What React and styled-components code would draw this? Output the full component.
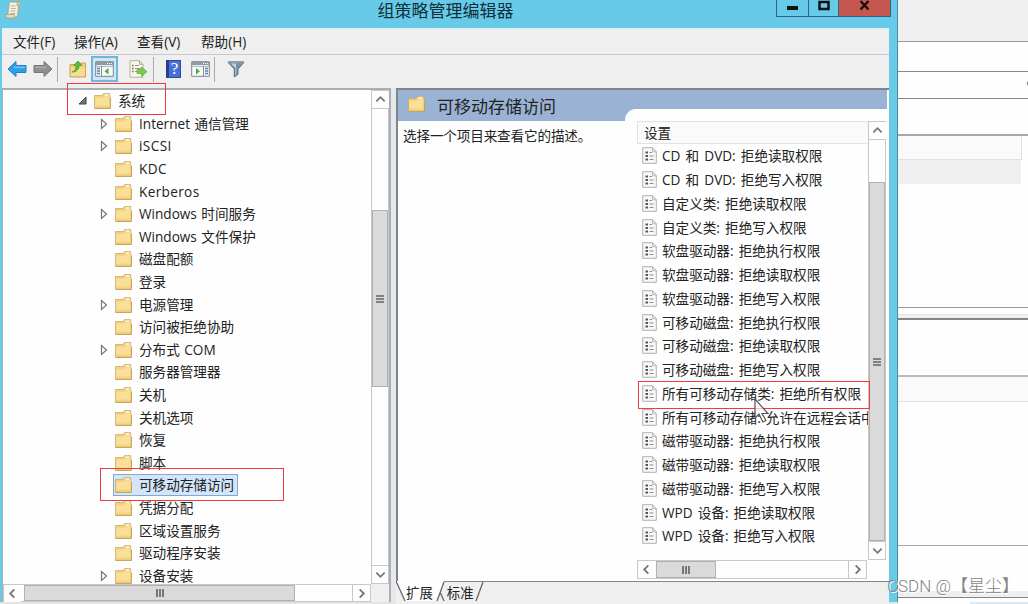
import React from "react";
import styled, { createGlobalStyle } from "styled-components";

const GlobalStyle = createGlobalStyle`
  * {
    box-sizing: border-box;
  }
  body {
    margin: 0;
    overflow: hidden;
    background: #fefefe;
    color: #222;
    font-family: "Open Sans", "Noto Sans CJK SC", sans-serif;
    font-size: 13.6px;
  }
  svg {
    display: block;
    flex: none;
  }
`;

const Screen = styled.div`
  position: relative;
  display: flex;
  width: 1028px;
  height: 604px;
  overflow: hidden;
  background: #e4e4e4;
`;

const Window = styled.div`
  display: flex;
  flex-direction: column;
  width: 898px;
  height: 602px;
  padding: 0 8px 0 2px;
  background: #68cae9;
  border-right: 1px solid #4f8ba0;
`;

const TitleBar = styled.div`
  position: relative;
  display: flex;
  justify-content: center;
  height: 28px;
  flex: none;
`;

const TitleIcon = styled.div`
  position: absolute;
  left: 3px;
  top: 1px;
`;

const Title = styled.div`
  font-size: 17px;
  line-height: 21px;
  color: #102e38;
`;

const WindowButtons = styled.div`
  position: absolute;
  top: 0;
  right: -2px;
  display: flex;
  height: 17px;
  border: 1px solid #2d6579;
  border-top: 0;
`;

const WindowButton = styled.div`
  display: flex;
  justify-content: center;
  width: ${(props) => props.$width}px;
  background: ${(props) => (props.$close ? "#c4574f" : "transparent")};
  border-left: ${(props) => (props.$first ? "0" : "1px solid #2d6579")};
`;

const MenuBar = styled.div`
  display: flex;
  height: 27px;
  flex: none;
  padding-left: 11px;
  background: #efefef;
  border-top: 1px solid #d9edf4;
  border-bottom: 1px solid #c9c9cd;
`;

const MenuItem = styled.div`
  width: ${(props) => props.$width}px;
  line-height: 25px;
  white-space: nowrap;
`;

const ToolBar = styled.div`
  display: flex;
  align-items: center;
  height: 33px;
  flex: none;
  padding: 0 0 5px 5px;
  background: #efefef;
`;

const Tool = styled.div`
  display: flex;
  align-items: center;
  justify-content: center;
  width: ${(props) => props.$width || 26}px;
  height: 26px;
  background: ${(props) => (props.$active ? "#cfe6f7" : "transparent")};
  border: ${(props) => (props.$active ? "2px solid #70b5dc" : "0")};
`;

const ToolSeparator = styled.div`
  width: 1px;
  height: 25px;
  margin: 0 ${(props) => props.$right}px 0 ${(props) => props.$left}px;
  background: #aaa;
`;

const Body = styled.div`
  display: flex;
  flex: 1;
  min-height: 0;
  background: #efefef;
`;

const TreePane = styled.div`
  display: flex;
  flex-direction: column;
  width: 389px;
  background: #efefef;
  border: solid #a9aeb5;
  border-width: 2px 2px 0 1px;
`;

const PaneRow = styled.div`
  display: flex;
  flex: 1;
  min-height: 0;
`;

const Tree = styled.div`
  flex: 1;
  overflow: hidden;
  background: #fefefe;
`;

const TreeRow = styled.div`
  display: flex;
  align-items: center;
  height: 22.6px;
  padding-left: ${(props) => props.$indent}px;
`;

const TreeArrow = styled.div`
  width: 14px;
`;

const TreeLabel = styled.div`
  display: flex;
  align-items: center;
  gap: 7px;
  height: 22px;
  padding: 0 3px 0 1px;
  line-height: 20px;
  letter-spacing: ${(props) => props.$tracking || 0}px;
  word-spacing: 1px;
  white-space: nowrap;
  border: 1px solid ${(props) => (props.$selected ? "#86a8cf" : "transparent")};
  background: ${(props) => (props.$selected ? "#d3e5fa" : "transparent")};
`;

const ScrollBar = styled.div`
  display: flex;
  flex-direction: ${(props) => (props.$vertical ? "column" : "row")};
  ${(props) => (props.$vertical ? "width" : "height")}: 18px;
  flex: none;
  background: #fdfdfd;
  border: 1px solid #c8c8c8;
`;

const ScrollButton = styled.div`
  display: flex;
  align-items: center;
  justify-content: center;
  flex: none;
  width: 17px;
  height: 17px;
  background: #fdfdfd;
`;

const ScrollGap = styled.div`
  flex: 0 0 ${(props) => props.$size}px;
  border: solid #c8c8c8;
  border-width: ${(props) => (props.$vertical ? "1px 0 0" : "0")};
`;

const ScrollThumb = styled.div`
  display: flex;
  align-items: center;
  justify-content: center;
  flex: 0 0 ${(props) => props.$size}px;
  background: #dadada;
  border: 1px solid #b1b1b1;
`;

const ScrollEnd = styled.div`
  display: flex;
  align-items: center;
  justify-content: center;
  width: ${(props) => (props.$vertical ? "auto" : "18px")};
  height: ${(props) => (props.$vertical ? "18px" : "auto")};
  margin-top: ${(props) => (props.$vertical ? "auto" : "0")};
  margin-left: ${(props) => (props.$vertical ? "0" : "auto")};
  border: solid #c8c8c8;
  border-width: ${(props) => (props.$vertical ? "1px 0 0" : "0 0 0 1px")};
`;

const Splitter = styled.div`
  width: 5px;
  background: #e6e8ec;
`;

const DetailPane = styled.div`
  display: flex;
  flex-direction: column;
  flex: 1;
  min-width: 0;
`;

const DetailFrame = styled.div`
  display: flex;
  flex-direction: column;
  height: 494px;
  background: #fefefe;
  border: solid #80858c;
  border-width: 2px 0 1px 2px;
`;

const DetailHeader = styled.div`
  display: flex;
  gap: 12px;
  height: 31px;
  flex: none;
  margin-right: 2px;
  padding: 6px 0 0 10px;
  font-size: 17px;
  background: #9ab2d3;
`;

const HeaderText = styled.div`
  line-height: 22px;
`;

const HeaderCut = styled.div`
  align-self: flex-end;
  flex: 1;
  height: 12px;
  margin-left: 57px;
  background: #fefefe;
  border-top-left-radius: 11px;
`;

const DetailContent = styled.div`
  display: flex;
  flex: 1;
  min-height: 0;
`;

const Description = styled.div`
  width: 239px;
  flex: none;
  padding: 5px 0 0 5px;
  line-height: 20px;
  letter-spacing: -0.15px;
`;

const SettingsArea = styled.div`
  display: flex;
  flex-direction: column;
  width: 249px;
`;

const Settings = styled.div`
  width: 231px;
  overflow: hidden;
`;

const ColumnHeader = styled.div`
  height: 23px;
  padding-left: 6px;
  line-height: 21px;
  background: #fafafa;
  border: 1px solid #e2e2e2;
  border-right: 0;
`;

const SettingRow = styled.div`
  display: flex;
  align-items: center;
  gap: 5px;
  height: 23.75px;
  padding-left: 5px;
  line-height: 23px;
  word-spacing: 1.6px;
  white-space: nowrap;
`;

const ListBottom = styled.div`
  display: flex;
  height: 21px;
  flex: none;
`;

const Tabs = styled.div`
  position: relative;
  flex: 1;
  display: flex;
  padding-left: 10px;
  gap: 14px;
  line-height: 23px;
  background: #efefef;
`;

const TabShape = styled.svg`
  position: absolute;
  left: 0;
  top: -1px;
`;

const TabLabel = styled.div`
  position: relative;
  font-size: 13.4px;
`;

const Backdrop = styled.div`
  display: flex;
  flex-direction: column;
  flex: 1;
  height: 604px;
  background: #fefefe;
`;

const Strip = styled.div`
  height: ${(props) => props.$height}px;
  flex: none;
  margin: 0 ${(props) => props.$inset || 0}px 0 ${(props) => props.$start || 0}px;
  background: ${(props) => props.$fill || "#fefefe"};
  border-bottom: ${(props) => props.$size || 1}px solid ${(props) => props.$line || "transparent"};
  border-right: ${(props) => (props.$edge ? "1px solid #e0e0e0" : "0")};
`;

const Highlight = styled.div`
  position: absolute;
  left: ${(props) => props.$x}px;
  top: ${(props) => props.$y}px;
  width: ${(props) => props.$width}px;
  height: ${(props) => props.$height}px;
  border: 1px solid #f23a3d;
`;

const Pointer = styled.svg`
  position: absolute;
  left: 754px;
  top: 398px;
`;

const ClippedGlyph = styled.div`
  position: absolute;
  left: 1027px;
  top: 81px;
  width: 5px;
  height: 5px;
  border-radius: 50%;
  background: #777;
`;

const Watermark = styled.div`
  position: absolute;
  left: 887px;
  top: 574px;
  font-family: Roboto, "Noto Sans CJK SC", sans-serif;
  font-size: 17px;
  font-weight: 300;
  line-height: 24px;
  color: #858585;
  text-shadow: 1px 1px 0 #fff;
  white-space: nowrap;
`;

const tree = [
  { name: "Internet 通信管理", expandable: true },
  { name: "iSCSI", expandable: true, tracking: 0.4 },
  { name: "KDC", tracking: 0.4 },
  { name: "Kerberos", tracking: 0.35 },
  { name: "Windows 时间服务", expandable: true },
  { name: "Windows 文件保护" },
  { name: "磁盘配额" },
  { name: "登录" },
  { name: "电源管理", expandable: true },
  { name: "访问被拒绝协助" },
  { name: "分布式 COM", expandable: true },
  { name: "服务器管理器" },
  { name: "关机" },
  { name: "关机选项" },
  { name: "恢复" },
  { name: "脚本" },
  { name: "可移动存储访问", selected: true },
  { name: "凭据分配" },
  { name: "区域设置服务" },
  { name: "驱动程序安装" },
  { name: "设备安装", expandable: true },
];

const settings = [
  "CD 和 DVD: 拒绝读取权限",
  "CD 和 DVD: 拒绝写入权限",
  "自定义类: 拒绝读取权限",
  "自定义类: 拒绝写入权限",
  "软盘驱动器: 拒绝执行权限",
  "软盘驱动器: 拒绝读取权限",
  "软盘驱动器: 拒绝写入权限",
  "可移动磁盘: 拒绝执行权限",
  "可移动磁盘: 拒绝读取权限",
  "可移动磁盘: 拒绝写入权限",
  "所有可移动存储类: 拒绝所有权限",
  "所有可移动存储: 允许在远程会话中",
  "磁带驱动器: 拒绝执行权限",
  "磁带驱动器: 拒绝读取权限",
  "磁带驱动器: 拒绝写入权限",
  "WPD 设备: 拒绝读取权限",
  "WPD 设备: 拒绝写入权限",
];

const chevrons = {
  up: "M1.5 8 6 3.5 10.5 8",
  down: "M1.5 4 6 8.5 10.5 4",
  left: "M8 1.5 3.5 6 8 10.5",
  right: "M4 1.5 8.5 6 4 10.5",
};

function Chevron({ to }) {
  return (
    <svg width="11" height="11" viewBox="0 0 12 12">
      <path d={chevrons[to]} fill="none" stroke="#777" strokeWidth="2" />
    </svg>
  );
}

function Grip({ vertical }) {
  return (
    <svg width="10" height="10" viewBox="0 0 10 10">
      <path
        d={vertical ? "M1 2h8M1 5h8M1 8h8" : "M2 1v8M5 1v8M8 1v8"}
        stroke="#666"
        strokeWidth="1.7"
      />
    </svg>
  );
}

function FolderIcon() {
  return (
    <svg width="17" height="16" viewBox="0 0 17 16">
      <path d="M.5 2.5h7.500L9.500.6h6.200v3l.6.6v11.200H.5z" fill="#f0cf80" stroke="#cfac62" strokeWidth=".8" />
      <path d="M1.200 4.800h8L11 3.200h4.600v11.500H1.200z" fill="#f9df98" />
      <path d="M10.500 2h4" stroke="#fff8e2" strokeWidth="1.400" />
      <path d="M1 12.500h15v2.300H1z" fill="#f4d383" />
      <path d="M.7 15.300h15.700V5" fill="none" stroke="#c39e50" strokeWidth=".9" />
    </svg>
  );
}

function SettingIcon() {
  return (
    <svg width="15" height="17" viewBox="0 0 15 17">
      <path d="M.7.7h10l3.6 3.8v11.8H.7z" fill="#f8f8f8" stroke="#b0b0b0" />
      <path d="M10.5.8v4h3.8" fill="#e2e2e2" stroke="#bbb" />
      <path d="M3.500 5.5H6M3.500 9H6M3.500 12.500H6" stroke="#555064" strokeWidth="2" />
      <path d="M7.500 5.5h2.500M7.500 9h4M7.500 12.500h4" stroke="#8c8999" strokeWidth="1.2" />
    </svg>
  );
}

function ScrollIcon() {
  return (
    <svg width="17" height="18" viewBox="0 0 17 18">
      <path d="M5 1h10c-1.5 1-1.5 2-1.5 4l-1 11H2.5L4 4c0-1.5 0-2.5 1-3z" fill="#f6efda" stroke="#a99b78" strokeWidth=".8" />
      <path d="M14 1c2.5 0 2.5 3.5 0 3.5h-2V2.5C12 1.5 13 1 14 1z" fill="#d9c69b" stroke="#a99b78" strokeWidth=".7" />
      <path d="M6 5h4.5M5.8 7.5h5M5.5 10h5M5.2 12.5h5" stroke="#b9b2a2" />
      <path d="M1 13.5h8.5c-.7 1.5 0 3.5 2 3.5H3c-2 0-2.5-2-2-3.5z" fill="#ebdcb4" stroke="#a99b78" strokeWidth=".8" />
    </svg>
  );
}

function ArrowIcon({ forward }) {
  return (
    <svg width="20" height="18" viewBox="0 0 20 18">
      <path
        d={forward ? "M19 9 11 1.5v4H1v7h10v4z" : "M1 9 9 1.5v4h10v7H9v4z"}
        fill={forward ? "#8f8f8f" : "#2f9ee5"}
        stroke={forward ? "#777" : "#2380bd"}
        strokeLinejoin="round"
      />
      <path d={forward ? "M2 7.3h11" : "M7 7.3h11"} stroke={forward ? "#aaa" : "#68c1f4"} strokeWidth="1.8" />
    </svg>
  );
}

function UpFolderIcon() {
  return (
    <svg width="18" height="18" viewBox="0 0 18 18">
      <path d="M1 4.500h9L11.500 3H16.500v14H1z" fill="#f1d081" stroke="#cba456" />
      <path d="M2 8h14v8H2z" fill="#f8dc94" />
      <path d="M3 12c3-1 4-3 4-6.500H4.500L9 1l4 4.500h-2.800C10 9 8 12 3 12z" fill="#58bf35" stroke="#3f9928" strokeWidth=".7" />
    </svg>
  );
}

function PaneIcon({ flipped }) {
  return (
    <svg width="19" height="16" viewBox="0 0 19 16">
      <path d="M.7.7h17.6v14.6H.7z" fill="#f9f9f9" stroke="#7b858f" />
      <path d="M1 1h17v3H1z" fill="#8f9aa5" />
      <path d="M12 2.5h1M14 2.5h1M16 2.5h1" stroke="#fff" />
      <path d="M1 5.3h17" stroke="#a4adb6" />
      {flipped ? (
        <>
          <path d="M12.5 5v10" stroke="#838d97" />
          <path d="M14 7.5h3M14 10h3M14 12.5h3" stroke="#4d83ae" strokeWidth="1.3" />
          <path d="m5 7 4 3.3L5 13.5z" fill="#4cac38" />
        </>
      ) : (
        <>
          <path d="M6.5 5v10" stroke="#838d97" />
          <path d="M2 7.5h3M2 10h3M2 12.5h3" stroke="#4d83ae" strokeWidth="1.3" />
          <path d="m13.5 7-4 3.3 4 3.2z" fill="#4cac38" />
        </>
      )}
    </svg>
  );
}

function ExportIcon() {
  return (
    <svg width="19" height="18" viewBox="0 0 19 18">
      <path d="M1 .7h9.5L14 4.2v13H1z" fill="#fcf8e9" stroke="#b5b09c" />
      <path d="M10.5.8v3.5H14" fill="#ddd" stroke="#aaa591" />
      <path d="M3 5.5h1.5M3 8.5h1.5M3 11.5h1.5" stroke="#666" strokeWidth="1.4" />
      <path d="M6 5.5h4M6 8.5h6M6 11.5h5" stroke="#999" />
      <path d="M8 9.5h4.5V7l5.5 4.7-5.5 4.5v-2.7H8z" fill="#75cf4c" stroke="#56aa36" strokeWidth=".7" />
    </svg>
  );
}

const HelpGlyph = styled.div`
  width: 15px;
  height: 18px;
  background: #4a6fd4;
  border: 1px solid #2c4c9c;
  border-left: 3px solid #243e90;
  color: #fff;
  font-family: "Liberation Serif", serif;
  font-size: 17px;
  line-height: 16px;
  text-align: center;
`;

function FilterIcon() {
  return (
    <svg width="18" height="18" viewBox="0 0 18 18">
      <path d="M1 2.3h16L11 9v5.3L7.3 17V9z" fill="#7892a9" stroke="#587188" />
      <path d="M4 3.5h5v5z" fill="#c4d4df" />
      <path d="M8.8 9v5.8" stroke="#b9cad6" />
      <path d="M1 2h16" stroke="#8e9daa" strokeWidth="2" />
    </svg>
  );
}

function VerticalBar({ gap, thumb }) {
  return (
    <ScrollBar $vertical>
      <ScrollButton><Chevron to="up" /></ScrollButton>
      <ScrollGap $vertical $size={gap} />
      <ScrollThumb $size={thumb}><Grip vertical /></ScrollThumb>
      <ScrollEnd $vertical><Chevron to="down" /></ScrollEnd>
    </ScrollBar>
  );
}

const HorizontalBar = styled(ScrollBar)`
  width: ${(props) => props.$length}px;
  height: ${(props) => props.$height || 18}px;
`;

export default function App() {
  return (
    <>
      <GlobalStyle />
      <Screen>
        <Window>
          <TitleBar>
            <TitleIcon><ScrollIcon /></TitleIcon>
            <Title>组策略管理编辑器</Title>
            <WindowButtons>
              <WindowButton $first $width={31}>
                <svg width="12" height="16"><path d="M0 8h11" stroke="#111" strokeWidth="4" /></svg>
              </WindowButton>
              <WindowButton $width={30}>
                <svg width="12" height="16"><path d="M1.500 2h9v7h-9z" fill="none" stroke="#111" strokeWidth="2.5" /></svg>
              </WindowButton>
              <WindowButton $close $width={52}>
                <svg width="11" height="16"><path d="m1.500 1 8 8.500M9.500 1l-8 8.500" stroke="#1c1010" strokeWidth="2.500" /></svg>
              </WindowButton>
            </WindowButtons>
          </TitleBar>
          <MenuBar>
            <MenuItem $width={61}>文件(F)</MenuItem>
            <MenuItem $width={63}>操作(A)</MenuItem>
            <MenuItem $width={64}>查看(V)</MenuItem>
            <MenuItem $width={60}>帮助(H)</MenuItem>
          </MenuBar>
          <ToolBar>
            <Tool $width={20}><ArrowIcon /></Tool>
            <Tool $width={31}><ArrowIcon forward /></Tool>
            <ToolSeparator $left={-1} $right={7} />
            <Tool $width={26}><UpFolderIcon /></Tool>
            <Tool $active $width={27}><PaneIcon /></Tool>
            <Tool $width={40}><ExportIcon /></Tool>
            <ToolSeparator $left={-5} $right={6} />
            <Tool $width={27}><HelpGlyph>?</HelpGlyph></Tool>
            <Tool $width={26}><PaneIcon flipped /></Tool>
            <ToolSeparator $left={1} $right={7} />
            <Tool $width={27}><FilterIcon /></Tool>
          </ToolBar>
          <Body>
            <TreePane>
              <PaneRow>
                <Tree>
                  <TreeRow $indent={75}>
                    <TreeArrow>
                      <svg width="10" height="10"><path d="M8 1v7H1z" fill="#777" stroke="#444" /></svg>
                    </TreeArrow>
                    <TreeLabel><FolderIcon />系统</TreeLabel>
                  </TreeRow>
                  {tree.map((item) => (
                    <TreeRow key={item.name} $indent={96}>
                      <TreeArrow>
                        {item.expandable && (
                          <svg width="10" height="12"><path d="M2.500 1.500 7.500 6l-5 4.500z" fill="#fff" stroke="#777" strokeWidth="1.200" /></svg>
                        )}
                      </TreeArrow>
                      <TreeLabel $selected={item.selected} $tracking={item.tracking}>
                        <FolderIcon />{item.name}
                      </TreeLabel>
                    </TreeRow>
                  ))}
                </Tree>
                <VerticalBar gap={102} thumb={177} />
              </PaneRow>
              <HorizontalBar $length={368}>
                <ScrollButton><Chevron to="left" /></ScrollButton>
                <ScrollGap $size={3} />
                <ScrollThumb $size={271}><Grip /></ScrollThumb>
                <ScrollEnd><Chevron to="right" /></ScrollEnd>
              </HorizontalBar>
            </TreePane>
            <Splitter />
            <DetailPane>
              <DetailFrame>
                <DetailHeader>
                  <FolderIcon />
                  <HeaderText>可移动存储访问</HeaderText>
                  <HeaderCut />
                </DetailHeader>
                <DetailContent>
                  <Description>选择一个项目来查看它的描述。</Description>
                  <SettingsArea>
                    <PaneRow>
                      <Settings>
                        <ColumnHeader>设置</ColumnHeader>
                        {settings.map((name) => (
                          <SettingRow key={name}><SettingIcon />{name}</SettingRow>
                        ))}
                      </Settings>
                      <VerticalBar gap={43} thumb={359} />
                    </PaneRow>
                    <ListBottom>
                      <HorizontalBar $length={230} $height={19}>
                        <ScrollButton><Chevron to="left" /></ScrollButton>
                        <ScrollGap $size={1} />
                        <ScrollThumb $size={60}><Grip /></ScrollThumb>
                        <ScrollEnd><Chevron to="right" /></ScrollEnd>
                      </HorizontalBar>
                    </ListBottom>
                  </SettingsArea>
                </DetailContent>
              </DetailFrame>
              <Tabs>
                <TabShape width="92" height="22">
                  <path d="M0 0 9 20h32L48 0z" fill="#fefefe" />
                  <path d="M0 0 9 20M41 20 48 1M44 11l4 9M80 20 87 1" fill="none" stroke="#666" strokeWidth="1.300" />
                </TabShape>
                <TabLabel>扩展</TabLabel>
                <TabLabel>标准</TabLabel>
              </Tabs>
            </DetailPane>
          </Body>
        </Window>
        <Backdrop>
          <Strip $height={42} $fill="#efefef" $line="#999" />
          <Strip $height={30} $line="#888" />
          <Strip $height={27} $line="#888" />
          <Strip $height={37} $line="#a5a7ae" $size={2} />
          <Strip $height={24} $fill="#fafafa" $line="#e1e1e1" $inset={6} $edge />
          <Strip $height={24} $fill="#efefef" $line="#efefef" $inset={7} />
          <Strip $height={124} $line="#989aa4" />
          <Strip $height={7} $line="#e5e5e5" />
          <Strip $height={5} $fill="#f0f0f0" $line="#858585" $size={2} />
          <Strip $height={57} $line="#b9bbc1" $size={2} />
          <Strip $height={25} $fill="#fafafa" $line="#dedede" />
          <Strip $height={144} $line="#a5a7ad" />
          <Strip $height={45} />
          <Strip $height={7} $fill="#efefef" $line="#858585" />
          <Strip $height={4} />
          <Strip $height={2} $fill="#d9ebfa" $line="#d9ebfa" $start={72} />
        </Backdrop>
        <ClippedGlyph />
        <Highlight $x={67} $y={83} $width={99} $height={32} />
        <Highlight $x={100} $y={468} $width={184} $height={33} />
        <Highlight $x={638} $y={381} $width={232} $height={28} />
        <Pointer width="17" height="27" viewBox="0 0 17 27">
          <path d="M1 1v19l4-4 4 8 3-1.500-4-7h6z" fill="#fff" fillOpacity=".65" stroke="#555" strokeWidth="1.200" />
        </Pointer>
        <Watermark>CSDN @【星尘】</Watermark>
      </Screen>
    </>
  );
}
